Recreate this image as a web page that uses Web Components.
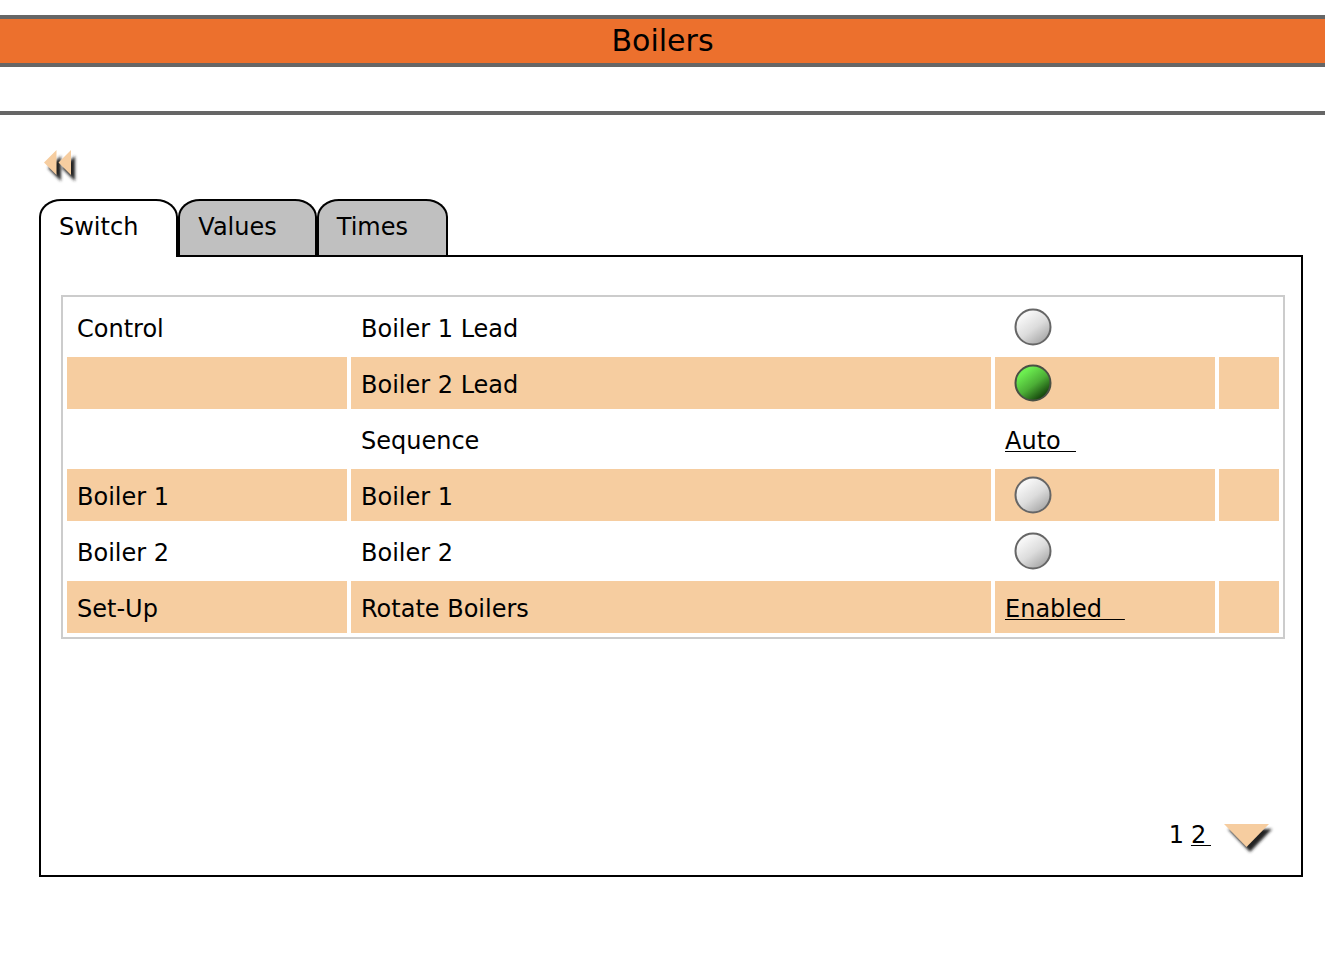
<!DOCTYPE html>
<html lang="en">
<head>
<meta charset="utf-8">
<title>Boilers</title>
<style>
body { margin: 0; background: #fff; color: #000; font: 24px/28px Verdana, "DejaVu Sans", sans-serif; }
</style>
</head>
<body>
<control-page>
  <page-banner slot="banner">Boilers</page-banner>
  <back-link></back-link>
  <tab-list>
    <tab-item selected>Switch</tab-item>
    <tab-item>Values</tab-item>
    <tab-item>Times</tab-item>
  </tab-list>
  <tab-panel>
    <point-table></point-table>
    <page-nav slot="footer"></page-nav>
  </tab-panel>
</control-page>
<script>
const define = (name, html, setup) => {
  const template = document.createElement('template');
  template.innerHTML = html;
  customElements.define(name, class extends HTMLElement {
    constructor() {
      super();
      this.attachShadow({ mode: 'open' }).append(template.content.cloneNode(true));
    }
    connectedCallback() {
      if (setup) setup(this, this.shadowRoot);
    }
  });
};

define('control-page', `
<style>
  :host { display: block; padding-top: 15px; }
  .strip { height: 44px; border-bottom: 4px solid #666; }
  main { padding: 34px 22px 40px 39px; }
</style>
<slot name="banner"></slot>
<div class="strip"></div>
<main><slot></slot></main>`);

define('page-banner', `
<style>
  :host { display: block; background: #ec702d; border: solid #666; border-width: 4px 0; }
  h1 { margin: 0; font-size: 30px; line-height: 44px; font-weight: normal; text-align: center; }
</style>
<h1><slot></slot></h1>`);

define('back-link', `
<style>
  :host { display: flex; height: 50px; padding-left: 5px; }
  a { display: block; height: 38px; }
  svg { display: block; }
</style>
<a href="#back" aria-label="Back">
  <svg width="38" height="38" viewBox="0 0 38 38" aria-hidden="true">
    <defs><filter id="soft" x="-40%" y="-40%" width="180%" height="180%"><feGaussianBlur stdDeviation="1.4"/></filter></defs>
    <path d="M4 19 17 7V32ZM18 19 31 7V32Z" fill="#222" filter="url(#soft)"/>
    <path d="M0 13.500 12.500 1V26ZM14.500 13.500 27 1V26Z" fill="#f6cda0"/>
  </svg>
</a>`);

define('tab-list', `
<style>
  :host { display: flex; }
</style>
<slot></slot>`, (el) => el.setAttribute('role', 'tablist'));

define('tab-item', `
<style>
  :host { display: block; }
  button {
    display: block; box-sizing: border-box; height: 56px; margin: 0; padding: 0 38px 2px 18px;
    border: 2px solid #000; border-bottom: 0; border-radius: 22px 22px 0 0 / 18px 18px 0 0;
    background: #c0c0c0; color: #000; font: inherit; text-align: left;
  }
  :host([selected]) { position: relative; z-index: 1; margin-bottom: -2px; }
  :host([selected]) button { height: 58px; padding-bottom: 4px; background: #fff; }
</style>
<button type="button" role="tab"><slot></slot></button>`,
(el, root) => root.querySelector('button').setAttribute('aria-selected', el.hasAttribute('selected')));

define('tab-panel', `
<style>
  :host {
    display: flex; flex-direction: column; justify-content: space-between; box-sizing: border-box;
    min-height: 622px; padding: 38px 16px 18px 20px; border: 2px solid #000;
  }
</style>
<slot></slot>
<slot name="footer"></slot>`);

define('status-lamp', `
<style>
  :host { display: block; padding-left: 9px; }
  svg { display: block; }
  .hi { stop-color: #f6f6f6; } .mid { stop-color: #dcdcdc; } .lo { stop-color: #aaa; }
  circle { stroke: #666; }
  :host([on]) .hi { stop-color: #6cee50; }
  :host([on]) .mid { stop-color: #4cae36; }
  :host([on]) .lo { stop-color: #123f0a; }
  :host([on]) circle { stroke: #4a5044; }
</style>
<svg width="38" height="38" viewBox="0 0 38 38" role="img">
  <defs><linearGradient id="shade" x1=".2" y1=".1" x2=".8" y2=".9">
    <stop class="hi" offset=".1"/><stop class="mid" offset=".55"/><stop class="lo" offset="1"/>
  </linearGradient></defs>
  <circle cx="19" cy="19" r="17.500" fill="url(#shade)" stroke-width="2"/>
</svg>`, (el, root) => root.querySelector('svg').setAttribute('aria-label', el.hasAttribute('on') ? 'On' : 'Off'));

const points = [
  ['Control', 'Boiler 1 Lead', false],
  ['', 'Boiler 2 Lead', true],
  ['', 'Sequence', 'Auto&nbsp;&nbsp;'],
  ['Boiler 1', 'Boiler 1', false],
  ['Boiler 2', 'Boiler 2', false],
  ['Set-Up', 'Rotate Boilers', 'Enabled&nbsp;&nbsp;&nbsp;'],
];
const valueCell = (v) => typeof v === 'string'
  ? `<a href="#edit">${v}</a>`
  : `<status-lamp${v ? ' on' : ''}></status-lamp>`;

define('point-table', `
<style>
  :host { display: block; }
  table { width: 100%; table-layout: fixed; border: 2px solid #ccc; border-collapse: separate; border-spacing: 4px; }
  td { box-sizing: border-box; height: 52px; padding: 3px 10px 0; vertical-align: middle; }
  td.lamp { padding-top: 0; }
  tr:nth-child(even) td { background: #f6cda0; }
  a { color: inherit; text-decoration: underline 1px; text-underline-offset: 2px; text-decoration-skip-ink: none; }
  .group { width: 280px; } .value { width: 220px; } .extra { width: 60px; }
</style>
<table>
  <colgroup><col class="group"><col><col class="value"><col class="extra"></colgroup>
  <tbody>${points.map(([group, name, value]) => `<tr><td>${group}</td><td>${name}</td><td${typeof value === 'string' ? '' : ' class="lamp"'}>${valueCell(value)}</td><td></td></tr>`).join('')}</tbody>
</table>`);

define('page-nav', `
<style>
  :host { display: block; }
  nav { display: flex; justify-content: flex-end; align-items: flex-start; gap: 7px; padding-right: 10px; }
  a { color: inherit; text-decoration: underline 1px; text-underline-offset: 2px; }
  .next { margin-left: 5px; padding-top: 2px; }
  svg { display: block; }
</style>
<nav aria-label="Pages">
  <span aria-current="page">1</span>
  <a href="#page-2">2&#8239;</a>
  <a class="next" href="#page-2" aria-label="Next page">
    <svg width="52" height="34" viewBox="0 0 52 34" aria-hidden="true">
      <defs><filter id="soft" x="-20%" y="-30%" width="140%" height="160%"><feGaussianBlur stdDeviation="1.4"/></filter></defs>
      <path d="M5 6H49L27 29Z" fill="#222" filter="url(#soft)"/>
      <path d="M1 1H46L23.500 24Z" fill="#f6cda0"/>
    </svg>
  </a>
</nav>`);
</script>
</body>
</html>
